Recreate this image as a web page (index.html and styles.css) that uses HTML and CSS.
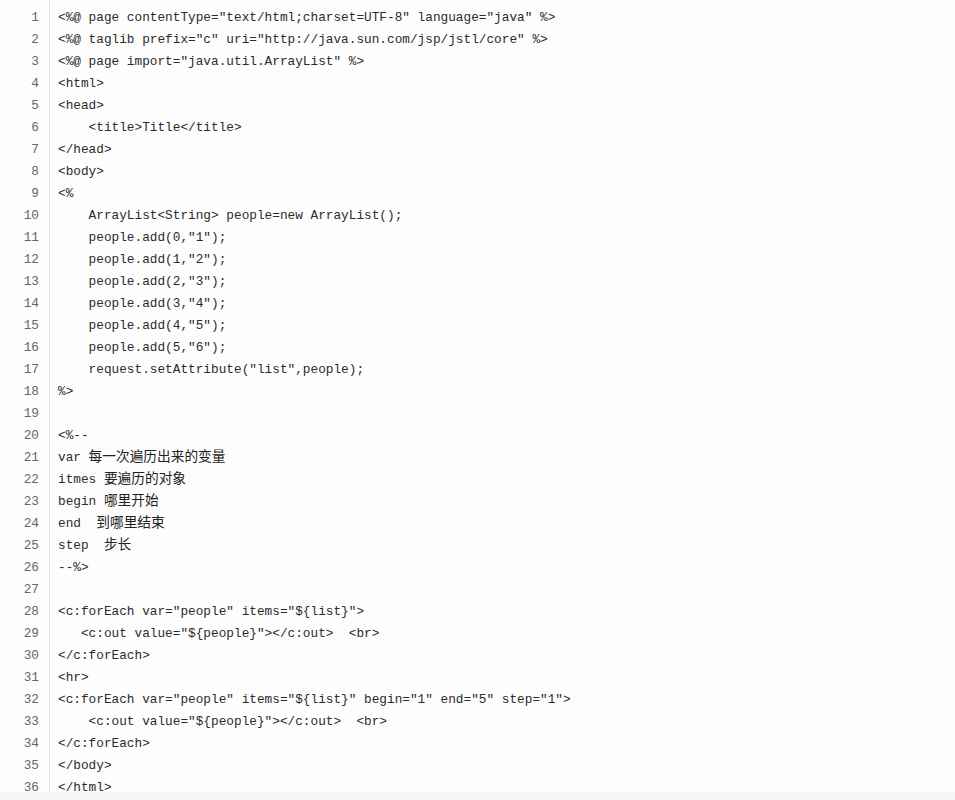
FILE: index.html
```html
<!DOCTYPE html>
<html lang="zh">
<head>
<meta charset="UTF-8">
<title>Code</title>
<link rel="stylesheet" href="styles.css">
</head>
<body>
<div class="block">
<div class="gutter"><div>1</div><div>2</div><div>3</div><div>4</div><div>5</div><div>6</div><div>7</div><div>8</div><div>9</div><div>10</div><div>11</div><div>12</div><div>13</div><div>14</div><div>15</div><div>16</div><div>17</div><div>18</div><div>19</div><div>20</div><div>21</div><div>22</div><div>23</div><div>24</div><div>25</div><div>26</div><div>27</div><div>28</div><div>29</div><div>30</div><div>31</div><div>32</div><div>33</div><div>34</div><div>35</div><div>36</div></div>
<pre class="code">&lt;%@ page contentType="text/html;charset=UTF-8" language="java" %&gt;
&lt;%@ taglib prefix="c" uri="http://java.sun.com/jsp/jstl/core" %&gt;
&lt;%@ page import="java.util.ArrayList" %&gt;
&lt;html&gt;
&lt;head&gt;
    &lt;title&gt;Title&lt;/title&gt;
&lt;/head&gt;
&lt;body&gt;
&lt;%
    ArrayList&lt;String&gt; people=new ArrayList();
    people.add(0,"1");
    people.add(1,"2");
    people.add(2,"3");
    people.add(3,"4");
    people.add(4,"5");
    people.add(5,"6");
    request.setAttribute("list",people);
%&gt;

&lt;%--
var <span class="zh">每一次遍历出来的变量</span>
itmes <span class="zh">要遍历的对象</span>
begin <span class="zh">哪里开始</span>
end  <span class="zh">到哪里结束</span>
step  <span class="zh">步长</span>
--%&gt;

&lt;c:forEach var="people" items="${list}"&gt;
   &lt;c:out value="${people}"&gt;&lt;/c:out&gt;  &lt;br&gt;
&lt;/c:forEach&gt;
&lt;hr&gt;
&lt;c:forEach var="people" items="${list}" begin="1" end="5" step="1"&gt;
    &lt;c:out value="${people}"&gt;&lt;/c:out&gt;  &lt;br&gt;
&lt;/c:forEach&gt;
&lt;/body&gt;
&lt;/html&gt;</pre>
</div>
<div class="band"></div>
</body>
</html>
```

FILE: styles.css
```css
html, body {
  margin: 0;
  padding: 0;
  background: #fdfdfd;
}

.block {
  display: flex;
  align-items: flex-start;
  height: 792px;
  background: #fdfdfd;
  font-family: "Liberation Mono", "DejaVu Sans Mono", monospace;
  font-size: 12.75px;
  line-height: 22px;
  color: #2b2b2b;
}

.gutter {
  width: 50px;
  height: 792px;
  box-sizing: border-box;
  flex: none;
  padding: 7px 10px 0 0;
  text-align: right;
  color: #666;
  border-right: 1px solid #e2e2e2;
}

.code {
  margin: 0;
  padding: 7px 0 0 8px;
  font: inherit;
  white-space: pre;
}

.zh {
  font-family: "Noto Sans CJK SC", sans-serif;
  font-size: 13.7px;
  line-height: 1;
  color: #222;
}

.band {
  height: 8px;
  background: #f5f5f5;
}
```
